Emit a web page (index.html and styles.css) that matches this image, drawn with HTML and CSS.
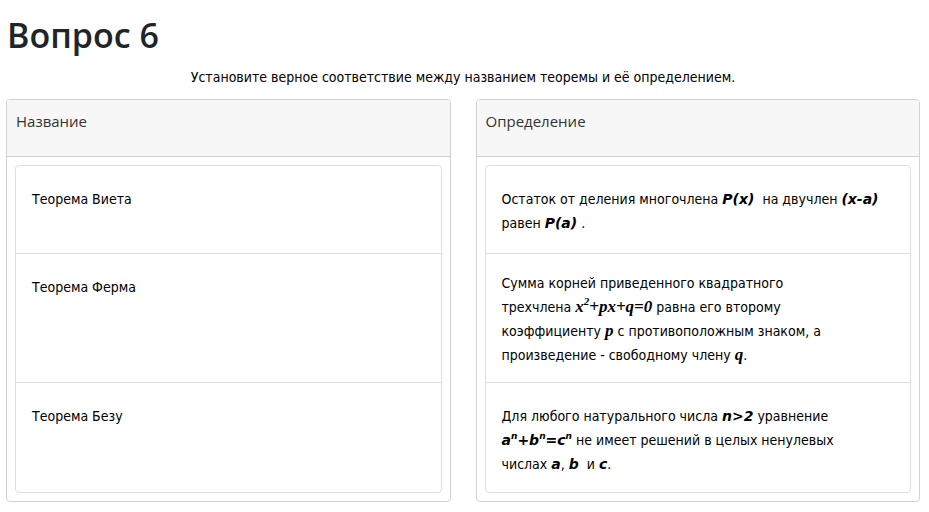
FILE: index.html
```html
<!DOCTYPE html>
<html lang="ru">
	<head>
		<meta charset="UTF-8" />
		<meta name="viewport" content="width=device-width, initial-scale=1.0" />
		<title>Вопрос 6</title>
		<link rel="stylesheet" href="styles.css">
	</head>
	<body>
		<div class="page">
			<h1 class="title">Вопрос 6</h1>
			<p class="task">Установите верное соответствие между названием теоремы и её определением.</p>
			<div class="columns">
				<div class="card">
					<div class="card-header">Название</div>
					<div class="card-body">
						<ul class="list">
							<li class="item">Теорема Виета</li>
							<li class="item">Теорема Ферма</li>
							<li class="item">Теорема Безу</li>
						</ul>
					</div>
				</div>
				<div class="card">
					<div class="card-header">Определение</div>
					<div class="card-body">
						<ul class="list">
							<li class="item">Остаток от деления многочлена <b class="m">P(x)</b>&nbsp; на двучлен <b class="m">(x-a)</b><br>равен <b class="m">P(a)</b> .</li>
							<li class="item item-tight">Сумма корней приведенного квадратного<br>трехчлена <b class="s">x<sup>2</sup>+px+q=0</b> равна его второму<br>коэффициенту <b class="s">p</b> с противоположным знаком, а<br>произведение - свободному члену <b class="s">q</b>.</li>
							<li class="item">Для любого натурального числа <b class="m">n&gt;2</b> уравнение<br><b class="m">a<sup>n</sup>+b<sup>n</sup>=c<sup>n</sup></b> не имеет решений в целых ненулевых<br>числах <b class="m">a</b>, <b class="m">b</b>&nbsp; и <b class="m">c</b>.</li>
						</ul>
					</div>
				</div>
			</div>
		</div>
	</body>
</html>
```

FILE: styles.css
```css
* {
	box-sizing: border-box;
}
body {
	margin: 0;
	background: #fff;
	font-family: "DejaVu Sans Condensed", "DejaVu Sans", sans-serif;
	color: #000;
}
.page {
	padding: 0 9px 0 6px;
}
.title {
	margin: 0;
	padding: 14px 0 0 1px;
	font-family: "Open Sans", sans-serif;
	font-weight: 600;
	font-size: 34px;
	line-height: 43px;
	color: #212529;
}
.task {
	margin: 10px 0 12px;
	text-align: center;
	font-size: 14px;
	line-height: 20px;
}
.columns {
	display: grid;
	grid-template-columns: 1fr 1fr;
	gap: 25px;
}
.card {
	border: 1px solid #d2d2d2;
	border-radius: 4px;
	overflow: hidden;
}
.card-header {
	height: 57px;
	padding: 10px 9px 0;
	background: #f7f7f7;
	border-bottom: 1px solid #d2d2d2;
	font-family: "Open Sans", sans-serif;
	font-size: 15px;
	line-height: 22px;
	color: #333;
}
.card-body {
	padding: 8px;
}
.list {
	margin: 0;
	padding: 0;
	list-style: none;
	border: 1px solid #dcdee2;
	border-radius: 4px;
}
.item {
	padding: 21px 16px 0;
	border-top: 1px solid #dcdee2;
	font-size: 14px;
	line-height: 24px;
}
.item:first-child {
	border-top: 0;
	height: 87px;
}
.item:nth-child(2) {
	height: 129px;
}
.item:nth-child(3) {
	height: 110px;
}
.item-tight {
	padding-top: 17px;
}
.m {
	font-family: "DejaVu Sans", sans-serif;
	font-style: italic;
	font-weight: bold;
}
.s {
	font-family: "Liberation Serif", serif;
	font-style: italic;
	font-weight: bold;
	font-size: 17px;
}
sup {
	font-size: 11px;
	line-height: 0;
}
.m sup {
	font-size: 9px;
}
```
